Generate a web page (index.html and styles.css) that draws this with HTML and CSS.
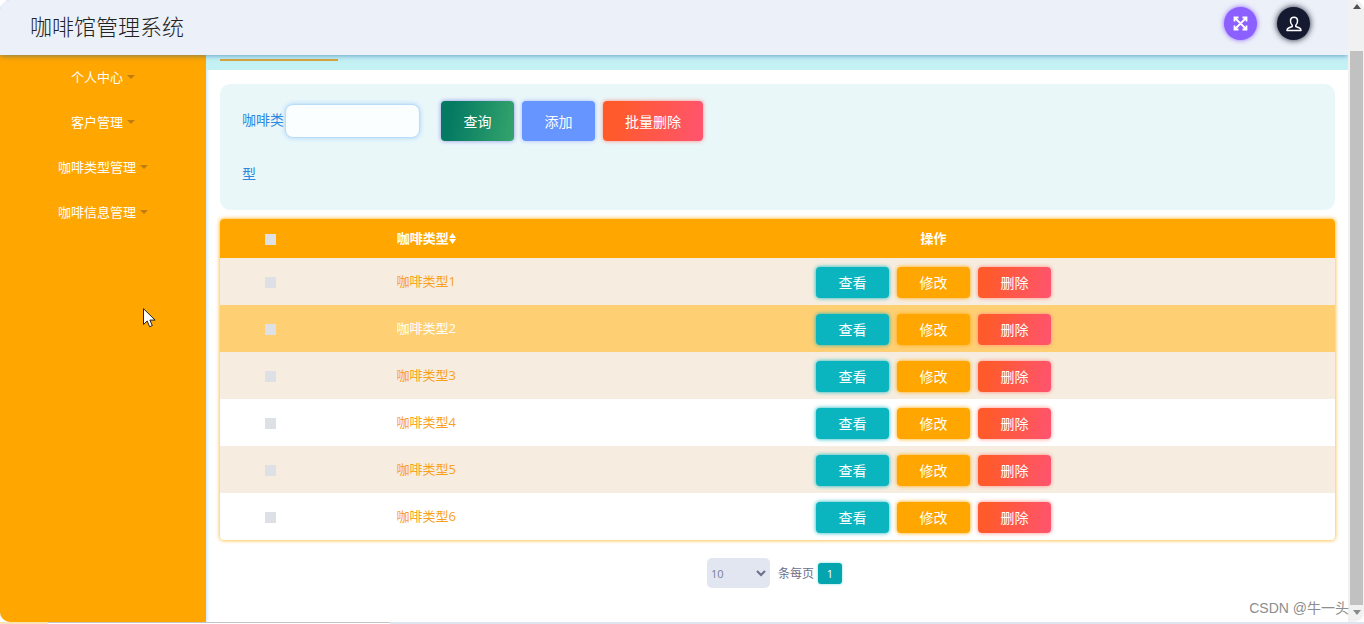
FILE: index.html
```html
<!DOCTYPE html>
<html lang="zh-CN">
<head>
<meta charset="utf-8">
<title>咖啡馆管理系统</title>
<link rel="stylesheet" href="styles.css">
</head>
<body>
<div class="window">
  <div class="app">
    <header class="header">
      <h1 class="brand">咖啡馆管理系统</h1>
      <div class="tools">
        <button class="round round-full" type="button" aria-label="全屏">
          <svg width="15" height="15" viewBox="0 0 15 15" fill="none" stroke="#fff" stroke-width="1.800"><path d="M1.500 5.500v-4h4M9.500 1.500h4v4M13.500 9.500v4h-4M5.500 13.500h-4v-4M1.500 1.500l12 12M13.500 1.500l-12 12"/></svg>
        </button>
        <button class="round round-user" type="button" aria-label="用户">
          <svg width="16" height="16" viewBox="0 0 16 16" fill="none" stroke="#fff" stroke-width="1.500" stroke-linejoin="round"><path d="M6.200 9.200C4.800 8 4.300 6 4.500 4.200 4.700 2.200 6 1.300 8 1.300s3.300.9 3.500 2.900c.2 1.800-.3 3.800-1.700 5v1.300l3.700 1.500c1 .5 1.500 1.200 1.500 2.500H1c0-1.300.5-2 1.500-2.500l3.700-1.500z"/></svg>
        </button>
      </div>
    </header>
    <div class="body">
      <nav class="sidebar">
        <a class="menu-item" href="#">个人中心<i class="caret"></i></a>
        <a class="menu-item" href="#">客户管理<i class="caret"></i></a>
        <a class="menu-item" href="#">咖啡类型管理<i class="caret"></i></a>
        <a class="menu-item" href="#">咖啡信息管理<i class="caret"></i></a>
      </nav>
      <main class="main">
        <div class="tabs"><div class="tab-line"></div></div>
        <div class="content">
          <form class="search">
            <label class="search-label" for="type">咖啡类型</label>
            <div class="search-controls">
              <input class="search-input" id="type" type="text">
              <button class="btn btn-query" type="button">查询</button>
              <button class="btn btn-add" type="button">添加</button>
              <button class="btn btn-danger" type="button">批量删除</button>
            </div>
          </form>
          <table class="table">
            <thead>
              <tr>
                <th class="col-check"><input class="check" type="checkbox" aria-label="全选"></th>
                <th class="col-type">咖啡类型<svg class="sort" width="7" height="11" viewBox="0 0 7 11" fill="#fff"><path d="M0 5L3.500 0 7 5zM0 6h7l-3.500 5z"/></svg></th>
                <th class="col-ops">操作</th>
              </tr>
            </thead>
            <tbody>
              <tr><td><input class="check" type="checkbox" aria-label="选择1"></td><td>咖啡类型1</td><td><div class="ops"><button class="btn btn-sm btn-view" type="button">查看</button><button class="btn btn-sm btn-edit" type="button">修改</button><button class="btn btn-sm btn-danger" type="button">删除</button></div></td></tr>
              <tr class="active"><td><input class="check" type="checkbox" aria-label="选择2"></td><td>咖啡类型2</td><td><div class="ops"><button class="btn btn-sm btn-view" type="button">查看</button><button class="btn btn-sm btn-edit" type="button">修改</button><button class="btn btn-sm btn-danger" type="button">删除</button></div></td></tr>
              <tr><td><input class="check" type="checkbox" aria-label="选择3"></td><td>咖啡类型3</td><td><div class="ops"><button class="btn btn-sm btn-view" type="button">查看</button><button class="btn btn-sm btn-edit" type="button">修改</button><button class="btn btn-sm btn-danger" type="button">删除</button></div></td></tr>
              <tr><td><input class="check" type="checkbox" aria-label="选择4"></td><td>咖啡类型4</td><td><div class="ops"><button class="btn btn-sm btn-view" type="button">查看</button><button class="btn btn-sm btn-edit" type="button">修改</button><button class="btn btn-sm btn-danger" type="button">删除</button></div></td></tr>
              <tr><td><input class="check" type="checkbox" aria-label="选择5"></td><td>咖啡类型5</td><td><div class="ops"><button class="btn btn-sm btn-view" type="button">查看</button><button class="btn btn-sm btn-edit" type="button">修改</button><button class="btn btn-sm btn-danger" type="button">删除</button></div></td></tr>
              <tr><td><input class="check" type="checkbox" aria-label="选择6"></td><td>咖啡类型6</td><td><div class="ops"><button class="btn btn-sm btn-view" type="button">查看</button><button class="btn btn-sm btn-edit" type="button">修改</button><button class="btn btn-sm btn-danger" type="button">删除</button></div></td></tr>
            </tbody>
          </table>
          <div class="pager">
            <span class="select-wrap">
              <select class="size" id="size"><option>10</option></select>
              <svg class="chevron" width="10" height="7" viewBox="0 0 10 7" fill="none" stroke="#6b6f8c" stroke-width="2"><path d="M1 1l4 4 4-4"/></svg>
            </span>
            <label class="size-label" for="size">条每页</label>
            <button class="page" type="button">1</button>
          </div>
        </div>
      </main>
    </div>
  </div>
  <div class="scrollbar">
    <svg width="8" height="5" viewBox="0 0 8 5" fill="#505050"><path d="M0 5l4-5 4 5z"/></svg>
    <div class="thumb"></div>
    <svg width="8" height="5" viewBox="0 0 8 5" fill="#8a8a8a"><path d="M0 0h8L4 5z"/></svg>
  </div>
  <div class="watermark">CSDN @牛一头</div>
  <svg class="cursor" width="13" height="20" viewBox="0 0 13 20"><path d="M.5.7v15.800l3.700-3.500 2.400 5.700 2.700-1.100-2.400-5.500h5.200z" fill="#fff" stroke="#222"/></svg>
</div>
<div class="edge"><div class="edge-line"></div></div>
</body>
</html>
```
FILE: styles.css
```css
* { box-sizing: border-box; }
body {
  margin: 0;
  height: 100vh;
  display: flex;
  flex-direction: column;
  background: #fff;
  font-family: "Open Sans", "Noto Sans CJK SC", sans-serif;
  font-size: 13px;
}
button, input, select { font: inherit; }
.window {
  position: relative;
  flex: 1;
  min-height: 0;
  display: flex;
  border-radius: 10px;
  overflow: hidden;
}
.app { flex: 1; display: flex; flex-direction: column; overflow: hidden; }
.header {
  position: relative;
  z-index: 1;
  height: 55px;
  padding: 0 38px 8px 30px;
  display: flex;
  align-items: center;
  justify-content: space-between;
  background: #ecf0f8;
  box-shadow: 0 0 6px rgba(20, 100, 170, .7);
}
.brand {
  margin: 0;
  padding-top: 2px;
  font-family: "Noto Sans CJK SC", sans-serif;
  font-size: 22px;
  font-weight: 300;
  line-height: 32px;
  color: #222;
}
.tools { display: flex; gap: 20px; }
.round {
  width: 33px;
  height: 33px;
  padding: 0;
  border: 0;
  border-radius: 50%;
  display: flex;
  align-items: center;
  justify-content: center;
}
.round-full { background: #8c5fff; box-shadow: 0 0 5px #8c5fff; }
.round-user { background: #151a30; box-shadow: 0 0 6px #151a30; }
.body { flex: 1; display: flex; }
.sidebar { width: 206px; background: #ffa600; box-shadow: 0 0 4px #9fd0f5; }
.menu-item {
  height: 45px;
  padding-bottom: 2px;
  display: flex;
  align-items: center;
  justify-content: center;
  gap: 4px;
  color: #fff;
  text-decoration: none;
}
.caret {
  border: 4px solid transparent;
  border-top-color: #bd7d10;
  border-bottom: 0;
}
.main { flex: 1; }
.tabs {
  height: 15px;
  padding: 4px 14px;
  background: #c4f1f4;
}
.tab-line { width: 118px; height: 2px; background: #dca63c; }
.content { padding: 14px 13px 0 14px; }
.search {
  display: flex;
  align-items: flex-start;
  padding: 9px 22px;
  border-radius: 10px;
  background: #e9f7f9;
}
.search-label {
  width: 43px;
  font-size: 14px;
  line-height: 54px;
  color: #2d86e0;
}
.search-controls {
  height: 56px;
  display: flex;
  align-items: center;
  gap: 8px;
}
.search-input {
  width: 135px;
  height: 34px;
  margin-right: 13px;
  padding: 0 12px;
  border: 1px solid #b9ddfa;
  border-radius: 8px;
  background: #fbfefe;
  box-shadow: 0 0 5px #a9d2fb;
}
.btn {
  min-width: 73px;
  height: 40px;
  padding: 0 22px 1px;
  border: 0;
  border-radius: 4px;
  color: #fff;
  font-size: 14px;
}
.btn-query { background: linear-gradient(100deg, #047a62 15%, #35a46c); box-shadow: 0 0 4px #8f8ce8; }
.btn-add { background: #6695ff; box-shadow: 0 0 4px #a9b8ff; }
.btn-danger { background: linear-gradient(100deg, #ff5a2c 15%, #ff5470); box-shadow: 0 0 4px #ff8a80; }
.btn-sm { height: 31px; }
.btn-view { background: #0bb5bf; box-shadow: 0 0 4px #0bb5bf; }
.btn-edit { background: #ffa600; box-shadow: 0 0 4px #ffa600; }
.table {
  width: 100%;
  margin-top: 9px;
  table-layout: fixed;
  border-spacing: 0;
  border-radius: 4px;
  overflow: hidden;
  box-shadow: 0 0 4px #ffa600;
  text-align: center;
  color: #f9a11b;
}
.table th { height: 39px; padding: 0 0 2px; background: #ffa600; color: #fff; }
.table td { height: 47px; padding: 0 0 2px; }
.table tbody tr:nth-child(odd) { background: #f6ede0; }
.table tbody .active { background: #ffcf73; color: #fff; }
.col-check { width: 9%; }
.col-type { width: 19%; }
.col-ops { width: 72%; }
.sort { vertical-align: -1px; }
.check {
  appearance: none;
  width: 11px;
  height: 11px;
  margin: 0;
  display: inline-block;
  vertical-align: middle;
  background: #dde1e5;
}
.ops { display: flex; justify-content: center; gap: 8px; padding-top: 4px; }
.pager {
  display: flex;
  align-items: center;
  justify-content: center;
  margin-top: 18px;
  padding-right: 6px;
  font-size: 12px;
  color: #6b6f8c;
}
.select-wrap { position: relative; display: flex; }
.size {
  appearance: none;
  width: 63px;
  height: 30px;
  padding: 0 4px;
  border: 0;
  border-radius: 5px;
  background: #e2e6f0;
  color: #7b7f98;
  font-size: 11px;
}
.chevron { position: absolute; right: 4px; top: 12px; pointer-events: none; }
.size-label { margin: 0 4px 0 8px; }
.page {
  width: 24px;
  height: 21px;
  padding: 0;
  border: 0;
  border-radius: 3px;
  background: #05a5af;
  box-shadow: 0 0 3px #7fdde2;
  color: #fff;
  font-size: 11px;
}
.scrollbar {
  width: 16px;
  padding: 4px 1px 7px 2px;
  display: flex;
  flex-direction: column;
  align-items: center;
  background: #f1f1f1;
}
.thumb { width: 100%; flex: 1; margin: 42px 0 5px; background: #c1c1c1; }
.watermark {
  position: absolute;
  right: 15px;
  bottom: 4px;
  z-index: 2;
  font-family: "Liberation Sans", "Noto Sans CJK SC", sans-serif;
  font-size: 14px;
  line-height: 20px;
  color: #8d8d8d;
}
.cursor { position: absolute; left: 143px; top: 308px; z-index: 2; }
.edge { height: 2px; padding: 0 0 0 48px; background: linear-gradient(90deg, #fbe3b8 48px, #dfe5ee 48px); }
.edge-line { width: 342px; height: 2px; background: #fff; border-top: 1px solid #c4c4c8; }
```
